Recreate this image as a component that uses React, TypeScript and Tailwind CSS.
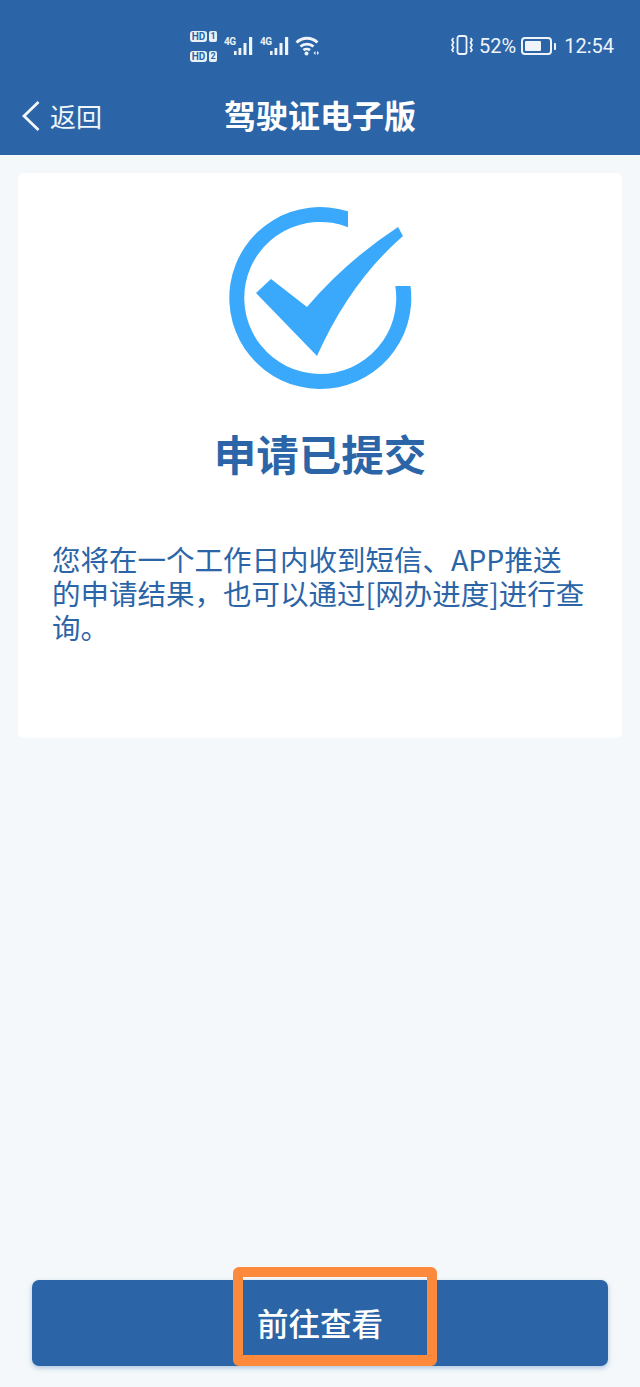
const cjk = "font-['Noto_Sans_CJK_SC','Noto_Sans',sans-serif]";

function Bars() {
  return (
    <div className="flex items-end">
      <span className="w-[10px] self-start text-[10px] leading-[10px] font-bold text-[#e8f0f8] tracking-[-0.5px] font-['Roboto',sans-serif]">4G</span>
      <svg width="20" height="18" viewBox="0 0 20 18" fill="#eef4fa">
        <rect x="0" y="14" width="2.6" height="4" />
        <rect x="4.5" y="11" width="2.8" height="7" />
        <rect x="9.500" y="6" width="3" height="12" />
        <rect x="15" y="0" width="3.200" height="18" />
      </svg>
    </div>
  );
}

function SimBadge({ n }: { n: string }) {
  return (
    <div className="flex items-center gap-[2px] font-['Roboto',sans-serif]">
      <span className="w-[17px] h-[11px] rounded-[3px] bg-[#e8f0f8] text-[#2b65a8] text-[10px] leading-[11px] font-bold text-center">HD</span>
      <span className="w-[8px] h-[11px] rounded-[2px] bg-[#e8f0f8] text-[#2b65a8] text-[9px] leading-[11px] font-bold text-center">{n}</span>
    </div>
  );
}

export default function App() {
  return (
    <div className={`w-[640px] h-[1387px] bg-[#f4f8fa] flex flex-col overflow-hidden ${cjk}`}>
      <div className="h-[155px] bg-[#2b65a8] flex flex-col">
        {/* status bar */}
        <div className="h-[62px] pt-[30px] pl-[190px] pr-[26px] flex items-start">
          <div className="flex flex-col gap-[9px] pt-[1px]">
            <SimBadge n="1" />
            <SimBadge n="2" />
          </div>
          <div className="flex gap-[6px] ml-[7px] mt-[7px]">
            <Bars />
            <Bars />
          </div>
          <svg className="ml-[5px] mt-[6px]" width="24" height="20" viewBox="0 0 24 20" fill="none" stroke="#eef4fa" strokeWidth="2.800">
            <path d="M1.500 6.500C7.500 .8 16.500 .8 22.500 6.500" />
            <path d="M5.500 10.500C9 7.200 15 7.200 18.500 10.500" />
            <path d="M8.500 14.200C10.200 12.800 13.300 12.800 15 14.200" />
            <circle cx="11.500" cy="17.500" r="2" fill="#eef4fa" stroke="none" />
            <path d="M18.500 17l2-2v4zM24 17l-2-2v4z" fill="#eef4fa" stroke="none" />
          </svg>
          <svg className="ml-auto mt-[5px]" width="22" height="20" viewBox="0 0 22 20" fill="none" stroke="#eef4fa" strokeWidth="1.800">
            <rect x="6.500" y="1" width="9" height="18" rx="2" />
            <path d="M2.500 3l-1.500 2 1.500 2.500-1.500 2.500 1.500 2.500-1.500 2.500 1.500 2M19.500 3l1.500 2-1.500 2.500 1.500 2.500-1.500 2.500 1.500 2.500-1.500 2" strokeWidth="1.700" />
          </svg>
          <span className="ml-[6px] text-[20px] leading-[32px] text-[#eef4fa] font-['Roboto',sans-serif]">52%</span>
          <div className="ml-[5px] mt-[7px] flex items-center">
            <div className="w-[31px] h-[18px] rounded-[4px] border-2 border-[#eef4fa] p-[2px]">
              <div className="w-[16px] h-full bg-[#eef4fa] rounded-[1px]" />
            </div>
            <div className="ml-[2px] w-[2px] h-[7px] bg-[#eef4fa] rounded-r-[1px]" />
          </div>
          <span className="ml-[8px] text-[20px] leading-[32px] text-[#eef4fa] font-['Roboto',sans-serif]">12:54</span>
        </div>
        {/* title bar */}
        <div className="h-[93px] pt-[11px] relative flex items-center justify-center">
          <div className="absolute left-[20px] top-[37px] flex items-center">
            <svg width="22" height="34" viewBox="0 0 22 34" fill="none" stroke="#f2f6fa" strokeWidth="2.800">
              <path d="M18.500 3L4 17l14.500 14" />
            </svg>
            <span className="ml-[8px] text-[26px] leading-[34px] text-[#f2f6fa]">返回</span>
          </div>
          <h1 className="text-[32px] leading-[44px] font-bold text-white">驾驶证电子版</h1>
        </div>
      </div>

      <div className="flex-1 flex flex-col">
        {/* result card */}
        <div className="mt-[18px] mx-[18px] h-[565px] bg-white rounded-[6px] flex flex-col items-center">
          <svg className="mt-[17px]" width="220" height="210" viewBox="0 0 220 210" fill="#3aa9fb">
            <path d="M138 21.300A91 91 0 1 0 200.500 96L185.300 96A76 76 0 1 1 138 37.200Z" />
            <path d="M46 103L61 89L97 117Q135 72 188 37L193 46Q140 92 107 166Z" />
          </svg>
          <h2 className="mt-[23px] text-[42.500px] leading-[60px] font-bold text-[#2b65a8]">申请已提交</h2>
          <p className="mt-[59px] w-[536px] text-[28.500px] leading-[34px] text-[#2b65a8]">
            您将在一个工作日内收到短信、APP推送的申请结果，也可以通过[网办进度]进行查询。
          </p>
        </div>

        {/* action button */}
        <div className="mt-auto mb-[21px] mx-[32px] h-[86px] relative bg-[#2b65a8] rounded-[7px] shadow-[0_2px_5px_rgba(43,101,168,0.35)] flex items-center justify-center">
          <span className="-mt-[3px] text-[31.500px] leading-[44px] font-medium text-white">前往查看</span>
          <div className="absolute left-[201px] top-[-13px] w-[204px] h-[99px] rounded-[6px] border-x-[10px] border-t-[10px] border-b-[11px] border-[#fd8a3c]" />
        </div>
      </div>
    </div>
  );
}
